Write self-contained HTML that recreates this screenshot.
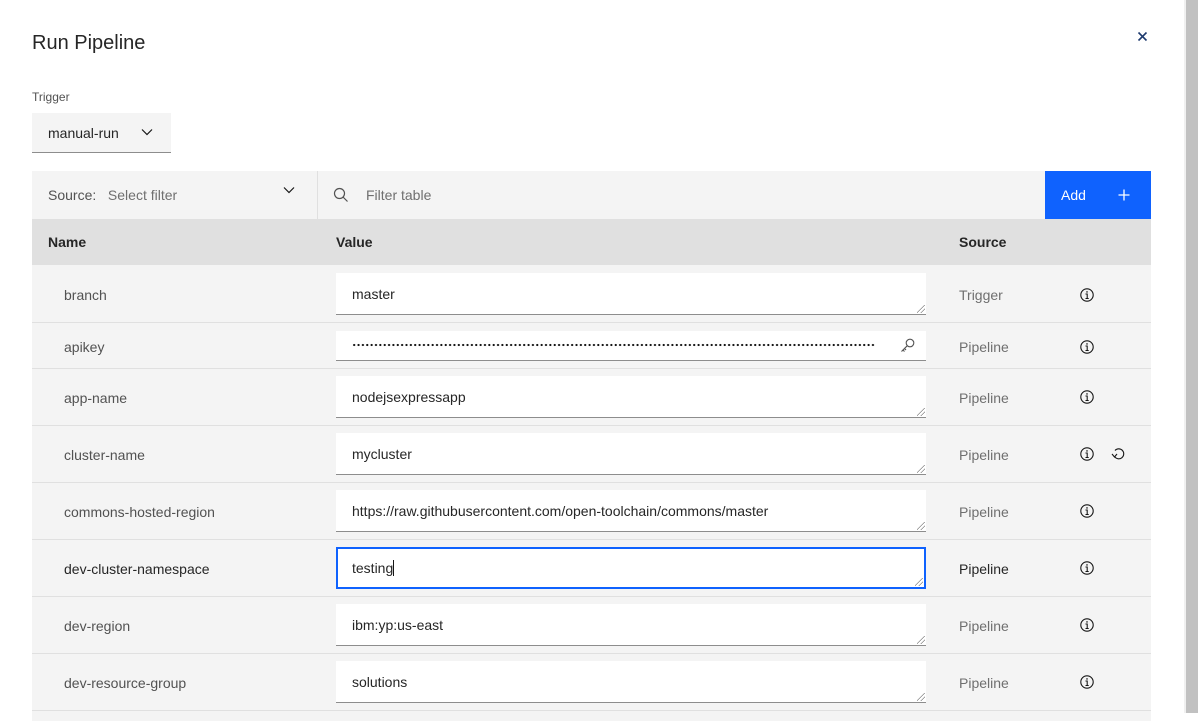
<!DOCTYPE html>
<html><head><meta charset="utf-8"><style>
*{box-sizing:border-box;margin:0;padding:0}
body{width:1198px;height:713px;overflow:hidden;background:#fff;font-family:"Liberation Sans",sans-serif;color:#161616;position:relative}
.abs{position:absolute}
.sb{position:absolute;left:1184px;top:0;width:14px;height:713px;background:#c1c1c1;border-left:2px solid #f0f0f0}
.row{position:absolute;left:32px;width:1119px;background:#f4f4f4;border-bottom:1px solid #e0e0e0}
.nm{position:absolute;left:32px;font-size:14px;color:#525252}
.src{position:absolute;left:927px;font-size:14px;color:#6f6f6f}
.ta{position:absolute;left:304px;width:590px;height:42px;background:#fff;border-bottom:1px solid #8d8d8d;font-size:14px;color:#262626;padding-left:16px;line-height:42px}
.ta.r:after{content:"";position:absolute;right:1px;bottom:1px;width:8px;height:8px;background:linear-gradient(135deg,transparent 45%,#888 45%,#888 52%,transparent 52%,transparent 70%,#888 70%,#888 77%,transparent 77%)}
.info{position:absolute;left:1048px;width:14px;height:14px}
</style></head><body>
<div class="abs" style="left:32px;top:32px;font-size:20px;color:#262626">Run Pipeline</div>
<svg class="abs" style="left:1137px;top:31px" width="11" height="11" viewBox="0 0 11 11"><path d="M1.5 1.5L9.5 9.5M9.5 1.5L1.5 9.5" stroke="#1d3a6e" stroke-width="1.6"/></svg>
<div class="abs" style="left:32px;top:90px;font-size:12px;color:#525252">Trigger</div>
<div class="abs" style="left:32px;top:113px;width:139px;height:40px;background:#f4f4f4;border-bottom:1px solid #8d8d8d;font-size:14px;line-height:40px;padding-left:16px;color:#262626">manual-run</div>
<svg class="abs" style="left:141px;top:128px" width="12" height="8" viewBox="0 0 12 8"><path d="M1 1.5L6 6.5L11 1.5" stroke="#161616" stroke-width="1.2" fill="none"/></svg>
<div class="abs" style="left:32px;top:171px;width:1013px;height:48px;background:#f4f4f4"></div>
<div class="abs" style="left:48px;top:187px;font-size:14px;color:#525252">Source:&nbsp;&nbsp; <span style="color:#6f6f6f">Select filter</span></div>
<svg class="abs" style="left:283px;top:186px" width="12" height="8" viewBox="0 0 12 8"><path d="M1 1.5L6 6.5L11 1.5" stroke="#161616" stroke-width="1.2" fill="none"/></svg>
<div class="abs" style="left:317px;top:171px;width:1px;height:48px;background:#e0e0e0"></div>
<svg class="abs" style="left:333px;top:187px" width="16" height="16" viewBox="0 0 16 16"><circle cx="6.5" cy="6.5" r="5" stroke="#525252" stroke-width="1.2" fill="none"/><path d="M10 10L14.5 14.5" stroke="#525252" stroke-width="1.2"/></svg>
<div class="abs" style="left:366px;top:187px;font-size:14px;color:#6f6f6f">Filter table</div>
<div class="abs" style="left:1045px;top:171px;width:106px;height:48px;background:#0f62fe;color:#fff;font-size:14px;line-height:48px;padding-left:16px">Add</div>
<svg class="abs" style="left:1118px;top:189px" width="12" height="12" viewBox="0 0 12 12"><path d="M6 0.5V11.5M0.5 6H11.5" stroke="#fff" stroke-width="1.3"/></svg>
<div class="abs" style="left:32px;top:219px;width:1119px;height:46px;background:#e0e0e0"></div>
<div class="abs" style="left:48px;top:234px;font-size:14px;font-weight:bold;color:#262626">Name</div>
<div class="abs" style="left:336px;top:234px;font-size:14px;font-weight:bold;color:#262626">Value</div>
<div class="abs" style="left:959px;top:234px;font-size:14px;font-weight:bold;color:#262626">Source</div>

<div class="row" style="top:265px;height:58px"><div class="nm" style="top:22px">branch</div><div class="ta r" style="top:8px">master</div><div class="src" style="top:22px">Trigger</div><svg class="info" style="top:23px" viewBox="0 0 14 14"><circle cx="7" cy="7" r="6.2" fill="none" stroke="#161616" stroke-width="1.1"/><path d="M5.5 6H7.2V10.5M5.5 10.5H8.7" stroke="#161616" stroke-width="1.1" fill="none"/><circle cx="7" cy="3.9" r="0.8" fill="#161616"/></svg></div>
<div class="row" style="top:323px;height:46px"><div class="nm" style="top:16px">apikey</div><div class="ta" style="top:8px;height:30px"><div style="position:absolute;left:16px;top:12px;width:523px;height:4px;background:radial-gradient(circle,#161616 0.9px,transparent 1.3px) 0 0/4.36px 4px repeat-x"></div></div><svg class="abs" style="left:868px;top:15px" width="15" height="15" viewBox="0 0 15 15"><circle cx="10" cy="5" r="3.8" fill="none" stroke="#525252" stroke-width="1.1"/><path d="M7.3 7.7L1.5 13.5M3 12L4.5 13.5M4.5 10.5L6 12" stroke="#525252" stroke-width="1.1" fill="none"/></svg><div class="src" style="top:16px">Pipeline</div><svg class="info" style="top:17px" viewBox="0 0 14 14"><circle cx="7" cy="7" r="6.2" fill="none" stroke="#161616" stroke-width="1.1"/><path d="M5.5 6H7.2V10.5M5.5 10.5H8.7" stroke="#161616" stroke-width="1.1" fill="none"/><circle cx="7" cy="3.9" r="0.8" fill="#161616"/></svg></div>
<div class="row" style="top:369px;height:57px"><div class="nm" style="top:21px">app-name</div><div class="ta r" style="top:7px">nodejsexpressapp</div><div class="src" style="top:21px">Pipeline</div><svg class="info" style="top:21px" viewBox="0 0 14 14"><circle cx="7" cy="7" r="6.2" fill="none" stroke="#161616" stroke-width="1.1"/><path d="M5.5 6H7.2V10.5M5.5 10.5H8.7" stroke="#161616" stroke-width="1.1" fill="none"/><circle cx="7" cy="3.9" r="0.8" fill="#161616"/></svg></div>
<div class="row" style="top:426px;height:57px"><div class="nm" style="top:21px">cluster-name</div><div class="ta r" style="top:7px">mycluster</div><div class="src" style="top:21px">Pipeline</div><svg class="info" style="top:21px" viewBox="0 0 14 14"><circle cx="7" cy="7" r="6.2" fill="none" stroke="#161616" stroke-width="1.1"/><path d="M5.5 6H7.2V10.5M5.5 10.5H8.7" stroke="#161616" stroke-width="1.1" fill="none"/><circle cx="7" cy="3.9" r="0.8" fill="#161616"/></svg><svg class="abs" style="left:1079px;top:21px" width="15" height="14" viewBox="0 0 15 14"><path d="M3.5 9.5A5 5 0 1 0 4 3.5" fill="none" stroke="#161616" stroke-width="1.1"/><path d="M1 7L3.5 10L6 7" fill="none" stroke="#161616" stroke-width="1.1"/></svg></div>
<div class="row" style="top:483px;height:57px"><div class="nm" style="top:21px">commons-hosted-region</div><div class="ta r" style="top:7px">https://raw.githubusercontent.com/open-toolchain/commons/master</div><div class="src" style="top:21px">Pipeline</div><svg class="info" style="top:21px" viewBox="0 0 14 14"><circle cx="7" cy="7" r="6.2" fill="none" stroke="#161616" stroke-width="1.1"/><path d="M5.5 6H7.2V10.5M5.5 10.5H8.7" stroke="#161616" stroke-width="1.1" fill="none"/><circle cx="7" cy="3.9" r="0.8" fill="#161616"/></svg></div>
<div class="row" style="top:540px;height:57px"><div class="nm" style="top:21px;color:#262626">dev-cluster-namespace</div><div class="ta r" style="top:7px;border:2px solid #0f62fe;padding-left:14px;line-height:38px">testing<span style="display:inline-block;width:1px;height:16px;background:#161616;vertical-align:-3px"></span></div><div class="src" style="top:21px;color:#262626">Pipeline</div><svg class="info" style="top:21px" viewBox="0 0 14 14"><circle cx="7" cy="7" r="6.2" fill="none" stroke="#161616" stroke-width="1.1"/><path d="M5.5 6H7.2V10.5M5.5 10.5H8.7" stroke="#161616" stroke-width="1.1" fill="none"/><circle cx="7" cy="3.9" r="0.8" fill="#161616"/></svg></div>
<div class="row" style="top:597px;height:57px"><div class="nm" style="top:21px">dev-region</div><div class="ta r" style="top:7px">ibm:yp:us-east</div><div class="src" style="top:21px">Pipeline</div><svg class="info" style="top:21px" viewBox="0 0 14 14"><circle cx="7" cy="7" r="6.2" fill="none" stroke="#161616" stroke-width="1.1"/><path d="M5.5 6H7.2V10.5M5.5 10.5H8.7" stroke="#161616" stroke-width="1.1" fill="none"/><circle cx="7" cy="3.9" r="0.8" fill="#161616"/></svg></div>
<div class="row" style="top:654px;height:57px"><div class="nm" style="top:21px">dev-resource-group</div><div class="ta r" style="top:7px">solutions</div><div class="src" style="top:21px">Pipeline</div><svg class="info" style="top:21px" viewBox="0 0 14 14"><circle cx="7" cy="7" r="6.2" fill="none" stroke="#161616" stroke-width="1.1"/><path d="M5.5 6H7.2V10.5M5.5 10.5H8.7" stroke="#161616" stroke-width="1.1" fill="none"/><circle cx="7" cy="3.9" r="0.8" fill="#161616"/></svg></div>
<div class="row" style="top:711px;height:10px;border:0"></div>
<div class="sb"></div>
</body></html>
